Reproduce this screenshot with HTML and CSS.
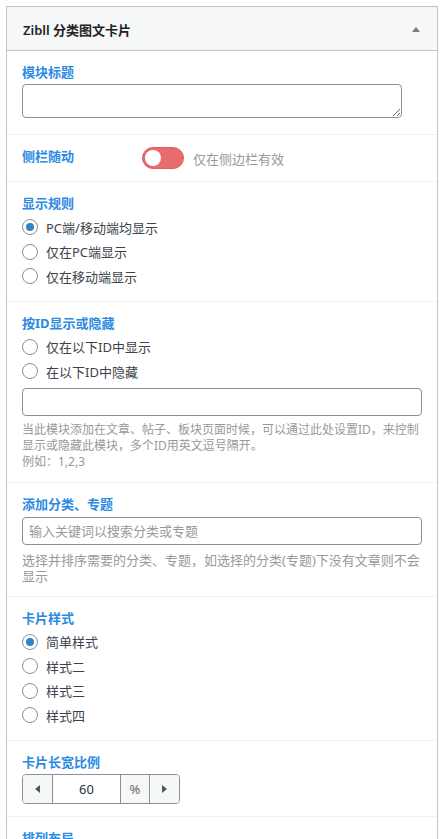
FILE: index.html
```html
<!DOCTYPE html>
<html lang="zh-CN">
<head>
    <meta charset="UTF-8">
    <meta name="viewport" content="width=device-width, initial-scale=1.0">
    <title>Zibll 分类图文卡片</title>
    <link rel="stylesheet" href="styles.css">
</head>
<body>
    <div class="widget">
        <div class="widget-top">
            <h3 class="widget-title">Zibll 分类图文卡片</h3>
            <span class="toggle-arrow"></span>
        </div>

        <div class="widget-inside">
            <div class="field">
                <div class="field-title">模块标题</div>
                <textarea class="field-textarea"></textarea>
            </div>

            <div class="field field-inline">
                <div class="field-title inline-title">侧栏随动</div>
                <div class="switch-wrap">
                    <span class="switch"><span class="switch-knob"></span></span>
                    <span class="switch-text">仅在侧边栏有效</span>
                </div>
            </div>

            <div class="field">
                <div class="field-title">显示规则</div>
                <ul class="radio-list">
                    <li><label><input type="radio" name="show" checked> PC端/移动端均显示</label></li>
                    <li><label><input type="radio" name="show"> 仅在PC端显示</label></li>
                    <li><label><input type="radio" name="show"> 仅在移动端显示</label></li>
                </ul>
            </div>

            <div class="field">
                <div class="field-title">按ID显示或隐藏</div>
                <ul class="radio-list">
                    <li><label><input type="radio" name="ids"> 仅在以下ID中显示</label></li>
                    <li><label><input type="radio" name="ids"> 在以下ID中隐藏</label></li>
                </ul>
                <input class="field-input ids-input" type="text">
                <div class="field-desc small">当此模块添加在文章、帖子、板块页面时候，可以通过此处设置ID，来控制显示或隐藏此模块，多个ID用英文逗号隔开。<br>例如：1,2,3</div>
            </div>

            <div class="field">
                <div class="field-title">添加分类、专题</div>
                <input class="field-input search-input" type="text" placeholder="输入关键词以搜索分类或专题">
                <div class="field-desc">选择并排序需要的分类、专题，如选择的分类(专题)下没有文章则不会显示</div>
            </div>

            <div class="field">
                <div class="field-title">卡片样式</div>
                <ul class="radio-list">
                    <li><label><input type="radio" name="style" checked> 简单样式</label></li>
                    <li><label><input type="radio" name="style"> 样式二</label></li>
                    <li><label><input type="radio" name="style"> 样式三</label></li>
                    <li><label><input type="radio" name="style"> 样式四</label></li>
                </ul>
            </div>

            <div class="field">
                <div class="field-title">卡片长宽比例</div>
                <div class="spinner">
                    <span class="spin-btn"><span class="arrow-left"></span></span>
                    <span class="spin-value">60</span>
                    <span class="spin-unit">%</span>
                    <span class="spin-btn last"><span class="arrow-right"></span></span>
                </div>
            </div>

            <div class="field">
                <div class="field-title">排列布局</div>
                <ul class="radio-list">
                    <li><label><input type="radio" name="layout" checked> 横向滚动</label></li>
                    <li><label><input type="radio" name="layout"> 网格排列</label></li>
                </ul>
            </div>
        </div>
    </div>
</body>
</html>
```

FILE: styles.css
```css
body {
    margin: 0;
    padding: 6px;
    background-color: #ffffff;
    font-family: "Noto Sans", "Noto Sans CJK SC", sans-serif;
    font-size: 13px;
    color: #3c434a;
}
.widget {
    width: 432px;
    box-sizing: border-box;
    border: 1px solid #c3c4c7;
    background-color: #ffffff;
}
.widget-top {
    height: 41px;
    padding: 2px 17px 0 16px;
    display: flex;
    align-items: center;
    justify-content: space-between;
    background-color: #f6f7f7;
    border-bottom: 1px solid #c3c4c7;
}
.widget-title {
    margin: 0;
    font-size: 13px;
    font-weight: 600;
    color: #1d2327;
}
.toggle-arrow {
    width: 0;
    height: 0;
    border-left: 4px solid transparent;
    border-right: 4px solid transparent;
    border-bottom: 5px solid #787c82;
}
.field {
    padding: 11px 15px 12px;
    border-bottom: 1px solid #f0f0f1;
}
.field-title {
    font-weight: 700;
    line-height: 20px;
    color: #2b8ae2;
}
.field-textarea {
    display: block;
    margin: 2px 0 4px;
    width: 380px;
    height: 34px;
    box-sizing: border-box;
    border: 1px solid #8c8f94;
    border-radius: 4px;
    font-family: inherit;
}
.field-inline {
    display: flex;
    padding-bottom: 11px;
}
.inline-title {
    width: 120px;
    flex-shrink: 0;
}
.switch-wrap {
    display: flex;
    align-items: center;
    height: 24px;
}
.switch {
    width: 42px;
    height: 22px;
    box-sizing: border-box;
    border-radius: 11px;
    background-color: #e96c6d;
    border: 1px solid #dd6062;
    padding: 2px;
    display: flex;
}
.switch-knob {
    width: 16px;
    height: 16px;
    border-radius: 50%;
    background-color: #ffffff;
}
.switch-text {
    margin-left: 9px;
    color: #999;
}
.radio-list {
    list-style: none;
    margin: 2px 0 0;
    padding: 0;
}
.radio-list li {
    height: 24.5px;
    display: flex;
    align-items: center;
}
.radio-list label {
    display: flex;
    align-items: center;
    gap: 8px;
}
.radio-list input {
    appearance: none;
    margin: 0;
    width: 16px;
    height: 16px;
    border: 1px solid #8c8f94;
    border-radius: 50%;
    background-color: #ffffff;
    display: flex;
    align-items: center;
    justify-content: center;
}
.radio-list input:checked::before {
    content: "";
    width: 8px;
    height: 8px;
    border-radius: 50%;
    background-color: #3582c4;
}
.field-input {
    display: block;
    width: 100%;
    height: 28px;
    box-sizing: border-box;
    border: 1px solid #8c8f94;
    border-radius: 4px;
    padding: 0 6px;
    font-family: inherit;
    font-size: 13px;
    color: #2c3338;
}
.field-input::placeholder {
    color: #999;
}
.ids-input {
    margin-top: 4px;
}
.search-input {
    margin-top: 3px;
}
.field-desc {
    margin-top: 7px;
    line-height: 16px;
    color: #999;
}
.field-desc.small {
    margin-top: 6px;
    font-size: 12px;
}
.spinner {
    display: inline-flex;
    margin-top: 2px;
    height: 30px;
    box-sizing: border-box;
    border: 1px solid #8c8f94;
    border-radius: 4px;
    overflow: hidden;
    vertical-align: top;
}
.spin-btn,
.spin-unit {
    width: 29px;
    display: flex;
    align-items: center;
    justify-content: center;
    background-color: #f6f7f7;
    border-right: 1px solid #8c8f94;
}
.spin-btn.last {
    border-right: none;
}
.spin-unit {
    width: 28px;
    color: #666;
}
.spin-value {
    width: 67px;
    display: flex;
    align-items: center;
    justify-content: center;
    border-right: 1px solid #8c8f94;
    color: #2c3338;
}
.arrow-left,
.arrow-right {
    width: 0;
    height: 0;
    border-top: 4px solid transparent;
    border-bottom: 4px solid transparent;
}
.arrow-left {
    border-right: 5px solid #50575e;
}
.arrow-right {
    border-left: 5px solid #50575e;
}
```
